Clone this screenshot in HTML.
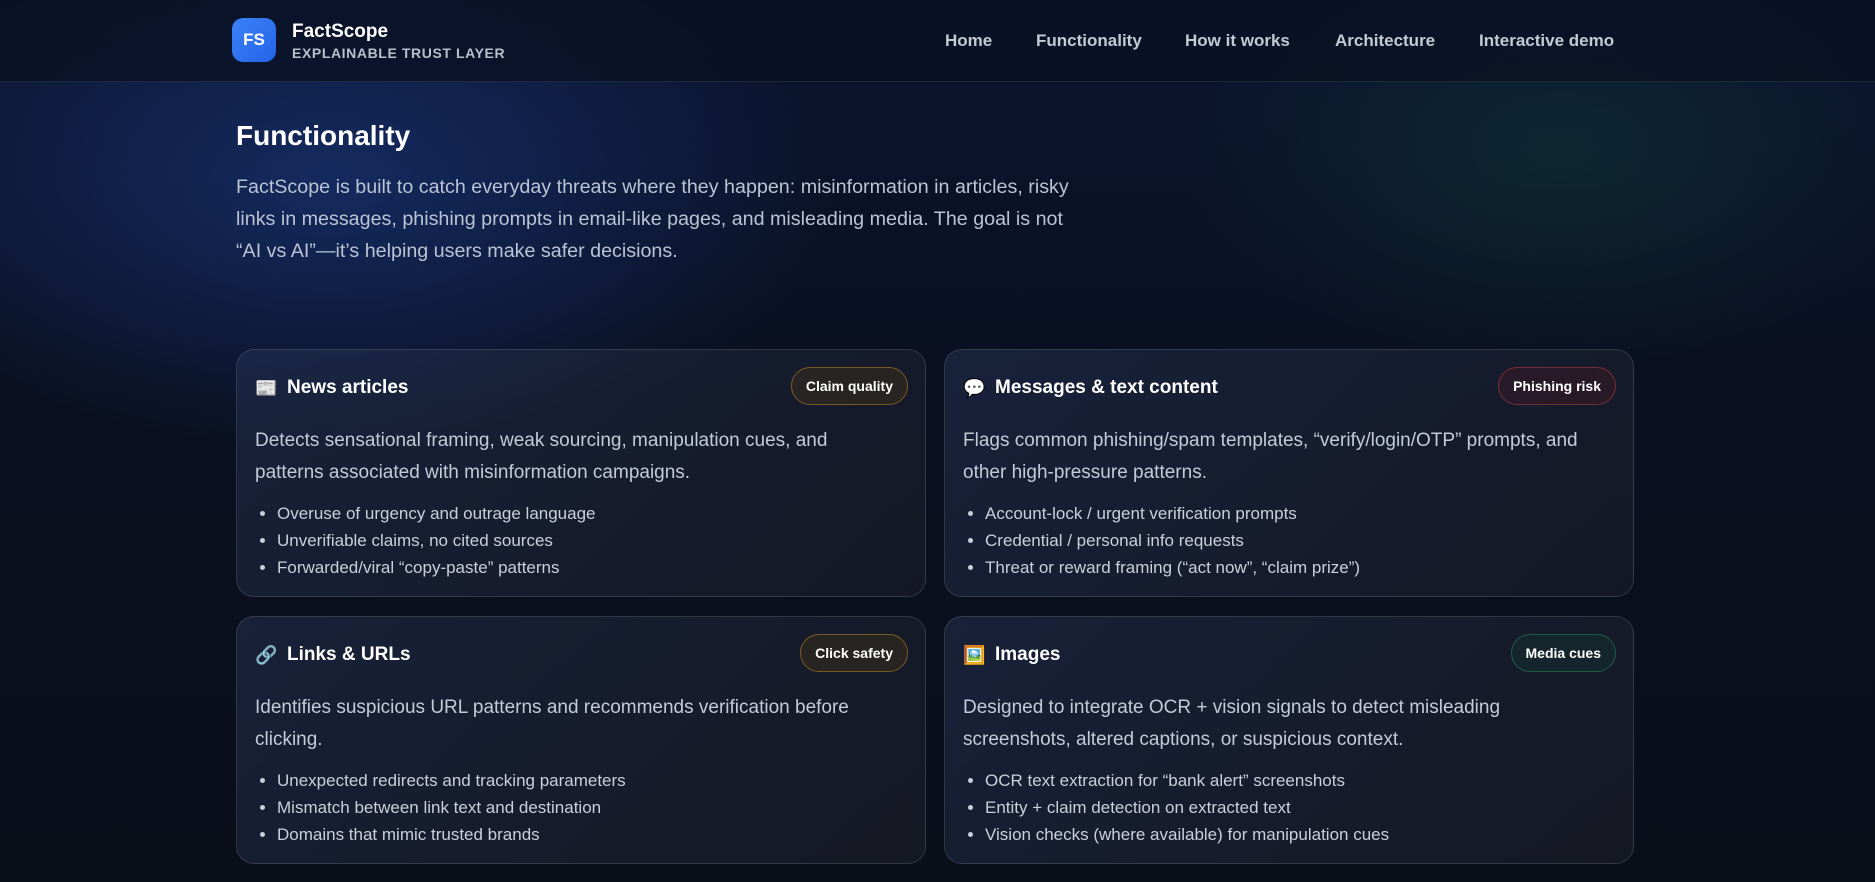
<!DOCTYPE html>
<html><head><meta charset="utf-8"><style>
*{margin:0;padding:0;box-sizing:border-box}
body{width:1875px;height:882px;overflow:hidden;font-family:"Liberation Sans",sans-serif;color:#e8edf5;
background:radial-gradient(ellipse 700px 380px at 330px 180px,rgba(30,65,150,.5),transparent 72%),
radial-gradient(ellipse 520px 300px at 1560px 150px,rgba(20,100,75,.25),transparent 72%),
linear-gradient(180deg,#0b1530 0%,#0a1020 45%,#0b0f1a 100%);}
.nav{height:82px;border-bottom:1px solid rgba(255,255,255,.09);background:rgba(10,16,34,.75);position:relative}
.logo{position:absolute;left:232px;top:18px;width:44px;height:44px;border-radius:11px;background:linear-gradient(135deg,#3b82f6,#2563eb);color:#fff;font-weight:700;font-size:17px;display:flex;align-items:center;justify-content:center}
.bn{position:absolute;left:292px;top:21px;font-weight:700;font-size:19px;color:#fff}
.bs{position:absolute;left:292px;top:45px;font-weight:700;font-size:14px;color:#b8c0cc;letter-spacing:.6px}
.links{position:absolute;top:31px;font-weight:700;font-size:17px;color:#c3cad6}
.links span{position:absolute;white-space:nowrap}
h1{position:absolute;left:236px;top:120px;font-size:28px;font-weight:700;color:#fff}
.intro{position:absolute;left:236px;top:171px;white-space:nowrap;font-size:19.7px;line-height:32px;color:#b9c4d4}
.card{position:absolute;width:690px;height:248px;border:1px solid rgba(255,255,255,.13);border-radius:18px;background:linear-gradient(135deg,rgba(40,55,90,.45),rgba(30,32,42,.55));padding:0 18px}
.t{position:absolute;left:18px;top:27px;font-size:19px;font-weight:700;color:#fff;display:flex;align-items:center;gap:10px}
.ic{font-size:18px;width:22px}
.b{position:absolute;right:17px;top:17px;height:38px;border-radius:19px;padding:0 14px;font-size:14px;font-weight:700;display:flex;align-items:center;color:#fff}
.d{position:absolute;left:18px;top:75px;width:622px;font-size:19px;line-height:32px;color:#c3cbd8}
ul{position:absolute;left:40px;top:150px;font-size:17px;line-height:27px;color:#c9d0db}
</style></head><body>
<div class="nav">
<div class="logo">FS</div><div class="bn">FactScope</div><div class="bs">EXPLAINABLE TRUST LAYER</div>
<div class="links"><span style="left:945px">Home</span><span style="left:1036px">Functionality</span><span style="left:1185px">How it works</span><span style="left:1335px">Architecture</span><span style="left:1479px">Interactive demo</span></div>
</div>
<h1>Functionality</h1>
<p class="intro">FactScope is built to catch everyday threats where they happen: misinformation in articles, risky<br>links in messages, phishing prompts in email-like pages, and misleading media. The goal is not<br>“AI vs AI”—it’s helping users make safer decisions.</p>

<div class="card" style="left:236px;top:349px">
<div class="t"><span class="ic">📰</span>News articles</div>
<div class="b" style="border:1px solid #7a5a24;background:rgba(60,45,25,.5)">Claim quality</div>
<div class="d">Detects sensational framing, weak sourcing, manipulation cues, and patterns associated with misinformation campaigns.</div>
<ul><li>Overuse of urgency and outrage language</li><li>Unverifiable claims, no cited sources</li><li>Forwarded/viral “copy-paste” patterns</li></ul>
</div>
<div class="card" style="left:944px;top:349px">
<div class="t"><span class="ic">💬</span>Messages &amp; text content</div>
<div class="b" style="border:1px solid #7a2e36;background:rgba(60,25,35,.5)">Phishing risk</div>
<div class="d">Flags common phishing/spam templates, “verify/login/OTP” prompts, and other high-pressure patterns.</div>
<ul><li>Account-lock / urgent verification prompts</li><li>Credential / personal info requests</li><li>Threat or reward framing (“act now”, “claim prize”)</li></ul>
</div>
<div class="card" style="left:236px;top:616px">
<div class="t"><span class="ic">🔗</span>Links &amp; URLs</div>
<div class="b" style="border:1px solid #7a5a24;background:rgba(60,45,25,.5)">Click safety</div>
<div class="d">Identifies suspicious URL patterns and recommends verification before clicking.</div>
<ul><li>Unexpected redirects and tracking parameters</li><li>Mismatch between link text and destination</li><li>Domains that mimic trusted brands</li></ul>
</div>
<div class="card" style="left:944px;top:616px">
<div class="t"><span class="ic">🖼️</span>Images</div>
<div class="b" style="border:1px solid #1f5a48;background:rgba(20,50,45,.5)">Media cues</div>
<div class="d">Designed to integrate OCR + vision signals to detect misleading screenshots, altered captions, or suspicious context.</div>
<ul><li>OCR text extraction for “bank alert” screenshots</li><li>Entity + claim detection on extracted text</li><li>Vision checks (where available) for manipulation cues</li></ul>
</div>
</body></html>
